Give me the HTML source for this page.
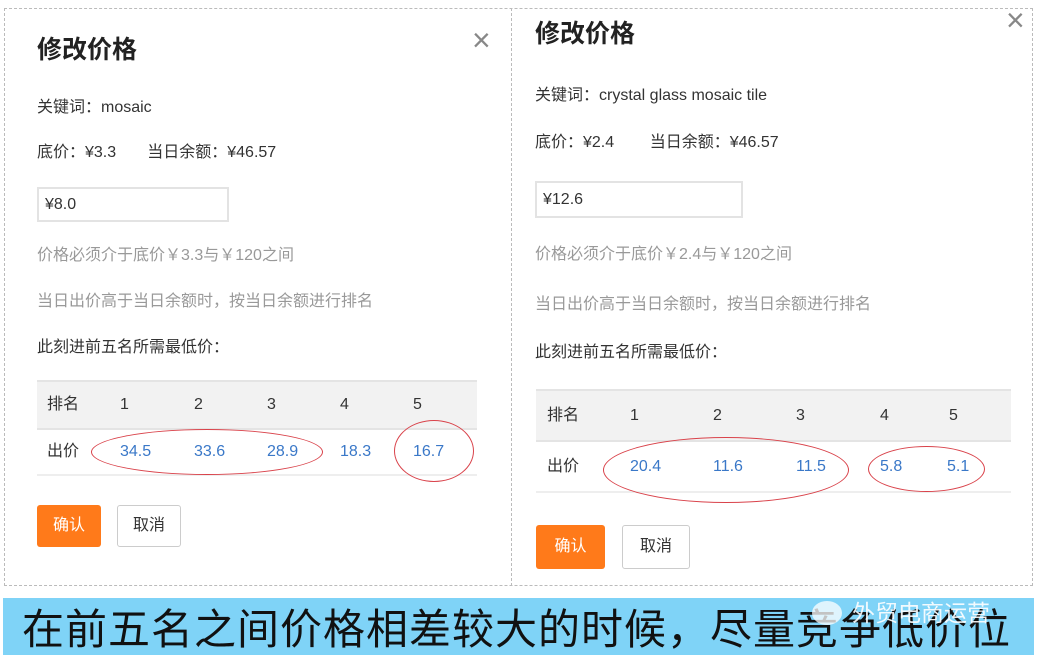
<!DOCTYPE html><html><head><meta charset="utf-8"><style>
body{margin:0;width:1044px;height:658px;background:#fff;position:relative;overflow:hidden;font-family:"Liberation Sans","Noto Sans CJK SC",sans-serif;}
.a{position:absolute;white-space:nowrap;}
.t{font-size:25px;font-weight:bold;color:#222;line-height:32px;}
.n{font-size:16px;color:#333;line-height:20px;}
.g{font-size:16px;color:#999;line-height:20px;}
.inp{position:absolute;border:2px solid #e3e3e3;box-sizing:border-box;font-size:16px;color:#333;padding-left:6px;}
.tb{position:absolute;background:#f2f2f2;border-top:2px solid #e4e4e4;border-bottom:2px solid #e4e4e4;box-sizing:border-box;}
.line{position:absolute;height:2px;background:#eee;}
.b{color:#3a78c8;}
.ok{position:absolute;background:#ff7a1a;color:#fff;font-size:16px;border-radius:3px;text-align:center;}
.cc{position:absolute;border:1px solid #ccc;background:#fff;color:#333;font-size:16px;border-radius:3px;text-align:center;box-sizing:border-box;}
.el{position:absolute;border:1.5px solid #d9424a;border-radius:50%;box-sizing:border-box;}
</style></head><body>
<div class="a" style="left:4px;top:8px;width:1029px;height:578px;border:1px dashed #bbb;box-sizing:border-box"></div>
<div class="a" style="left:511px;top:8px;height:578px;border-left:1px dashed #bbb"></div>
<!-- left -->
<div class="a t" style="left:37px;top:34px">修改价格</div>
<div class="a" style="left:472px;top:22px;font-size:32px;color:#888;font-weight:100">×</div>
<div class="a n" style="left:37px;top:98px">关键词：mosaic</div>
<div class="a n" style="left:37px;top:143px">底价：¥3.3 &nbsp;&nbsp;&nbsp;&nbsp;&nbsp;&nbsp;当日余额：¥46.57</div>
<div class="inp" style="left:37px;top:187px;width:192px;height:35px;line-height:31px">¥8.0</div>
<div class="a g" style="left:37px;top:246px">价格必须介于底价￥3.3与￥120之间</div>
<div class="a g" style="left:37px;top:292px">当日出价高于当日余额时，按当日余额进行排名</div>
<div class="a n" style="left:37px;top:338px">此刻进前五名所需最低价：</div>
<div class="tb" style="left:37px;top:380px;width:440px;height:50px"></div>
<div class="a n" style="left:47px;top:395px">排名</div>
<div class="a n" style="left:120px;top:395px">1</div><div class="a n" style="left:194px;top:395px">2</div><div class="a n" style="left:267px;top:395px">3</div><div class="a n" style="left:340px;top:395px">4</div><div class="a n" style="left:413px;top:395px">5</div>
<div class="a n" style="left:47px;top:442px">出价</div>
<div class="a n b" style="left:120px;top:442px">34.5</div><div class="a n b" style="left:194px;top:442px">33.6</div><div class="a n b" style="left:267px;top:442px">28.9</div><div class="a n b" style="left:340px;top:442px">18.3</div><div class="a n b" style="left:413px;top:442px">16.7</div>
<div class="line" style="left:37px;top:474px;width:440px"></div>
<div class="el" style="left:91px;top:429px;width:232px;height:46px"></div>
<div class="el" style="left:394px;top:420px;width:80px;height:62px"></div>
<div class="ok" style="left:37px;top:505px;width:64px;height:42px;line-height:42px">确认</div>
<div class="cc" style="left:117px;top:505px;width:64px;height:42px;line-height:40px">取消</div>
<!-- right -->
<div class="a t" style="left:535px;top:18px">修改价格</div>
<div class="a" style="left:1006px;top:2px;font-size:32px;color:#888">×</div>
<div class="a n" style="left:535px;top:86px">关键词：crystal glass mosaic tile</div>
<div class="a n" style="left:535px;top:133px">底价：¥2.4 &nbsp;&nbsp;&nbsp;&nbsp;&nbsp;&nbsp;&nbsp;当日余额：¥46.57</div>
<div class="inp" style="left:535px;top:181px;width:208px;height:37px;line-height:33px">¥12.6</div>
<div class="a g" style="left:535px;top:245px">价格必须介于底价￥2.4与￥120之间</div>
<div class="a g" style="left:535px;top:295px">当日出价高于当日余额时，按当日余额进行排名</div>
<div class="a n" style="left:535px;top:343px">此刻进前五名所需最低价：</div>
<div class="tb" style="left:536px;top:389px;width:475px;height:53px"></div>
<div class="a n" style="left:547px;top:406px">排名</div>
<div class="a n" style="left:630px;top:406px">1</div><div class="a n" style="left:713px;top:406px">2</div><div class="a n" style="left:796px;top:406px">3</div><div class="a n" style="left:880px;top:406px">4</div><div class="a n" style="left:949px;top:406px">5</div>
<div class="a n" style="left:547px;top:457px">出价</div>
<div class="a n b" style="left:630px;top:457px">20.4</div><div class="a n b" style="left:713px;top:457px">11.6</div><div class="a n b" style="left:796px;top:457px">11.5</div><div class="a n b" style="left:880px;top:457px">5.8</div><div class="a n b" style="left:947px;top:457px">5.1</div>
<div class="line" style="left:536px;top:491px;width:475px"></div>
<div class="el" style="left:603px;top:437px;width:246px;height:66px"></div>
<div class="el" style="left:868px;top:446px;width:117px;height:46px"></div>
<div class="ok" style="left:536px;top:525px;width:69px;height:44px;line-height:44px">确认</div>
<div class="cc" style="left:622px;top:525px;width:68px;height:44px;line-height:42px">取消</div>
<!-- banner -->
<div class="a" style="left:3px;top:598px;width:1031px;height:57px;background:#7fd3f7"></div>
<div class="a" style="left:22px;top:598px;font-size:42px;color:#111;line-height:57px;letter-spacing:1px;font-family:'Noto Sans CJK SC',sans-serif">在前五名之间价格相差较大的时候，尽量竞争低价位</div>
<div class="a" style="left:852px;top:594px;font-size:23px;color:#fff;font-family:'Noto Sans CJK SC',sans-serif;opacity:.9">外贸电商运营</div>
<div class="a" style="left:812px;top:601px;width:30px;height:24px;border-radius:50%;background:rgba(255,255,255,.75)"></div>
</body></html>
